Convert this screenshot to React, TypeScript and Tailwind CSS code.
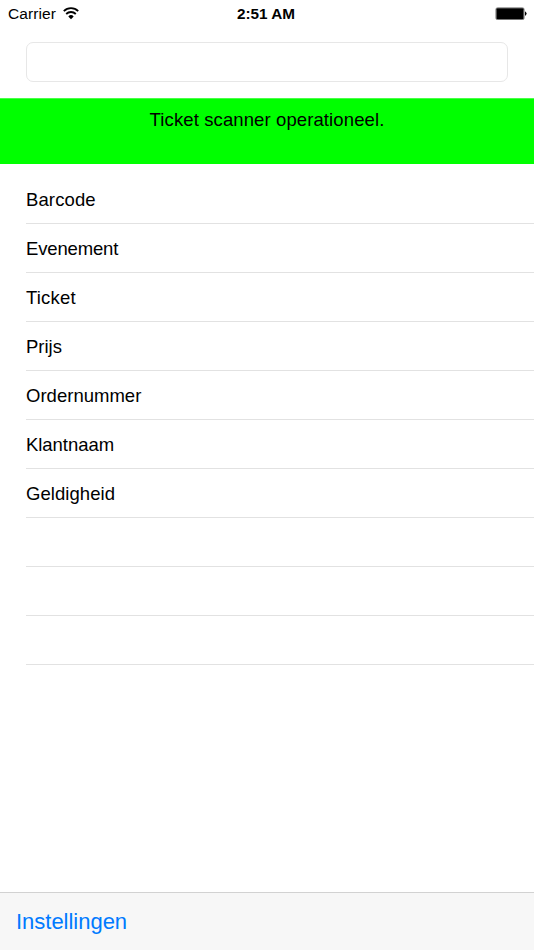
const rows = [
  { label: "Barcode", tracking: "tracking-[0.12px]" },
  { label: "Evenement", tracking: "tracking-[-0.15px]" },
  { label: "Ticket", tracking: "tracking-[0.2px]" },
  { label: "Prijs", tracking: "tracking-normal" },
  { label: "Ordernummer", tracking: "tracking-[0.02px]" },
  { label: "Klantnaam", tracking: "tracking-[-0.04px]" },
  { label: "Geldigheid", tracking: "tracking-[0.06px]" },
  { label: "", tracking: "" },
  { label: "", tracking: "" },
  { label: "", tracking: "" },
];

function WifiIcon() {
  return (
    <svg width="16" height="13" viewBox="0 0 16 13" fill="none" stroke="black" strokeWidth="1.8">
      <path d="M.8 4.1a10.2 10.2 0 0 1 14.4 0M3.2 7a6.8 6.8 0 0 1 9.6 0" />
      <path d="M8 12.2 5.3 9.4a3.9 3.9 0 0 1 5.4 0Z" fill="black" stroke="none" />
    </svg>
  );
}

function BatteryIcon() {
  return (
    <svg className="justify-self-end" width="32" height="13" viewBox="0 0 32 13">
      <rect x=".9" y=".8" width="28.2" height="11.9" rx="1.6" fill="white" stroke="#666" strokeWidth=".8" />
      <rect x="1.4" y="1.3" width="27.2" height="10.9" rx="1" />
      <path d="M30 4.3q3.2 2.3 0 4.6Z" />
    </svg>
  );
}

export default function App() {
  return (
    <div className="flex h-[950px] w-[534px] flex-col bg-white font-['Liberation_Sans',Arial,sans-serif] text-black">
      <header className="grid h-[27px] grid-cols-3 items-center pl-2 pr-[7px] text-[15.5px] leading-[27px]">
        <div className="flex items-center gap-[7px]">
          <span className="tracking-[0.08px]">Carrier</span>
          <WifiIcon />
        </div>
        <span className="pr-[3px] text-center text-[15.3px] font-bold">2:51 AM</span>
        <BatteryIcon />
      </header>
      <div className="flex h-[71px] px-[26px] pt-[15px]">
        <input aria-label="Barcode" className="h-10 w-full rounded-[7px] border border-[#e7e7e7] bg-white px-2 outline-none" />
      </div>
      <div className="h-[66px] border-t border-[#48ff48] bg-[#00ff00] pt-2 text-center text-[18.5px] leading-[26px] tracking-[0.11px]">
        Ticket scanner operationeel.
      </div>
      <main className="flex-1 pl-[26px] pt-[11px] text-[18.5px]">
        {rows.map((row, i) => (
          <div key={i} className={`flex h-[49px] items-center border-b border-[#e2e2e2] pt-[2px] ${row.tracking}`}>
            {row.label}
          </div>
        ))}
      </main>
      <footer className="flex h-[58px] items-center border-t border-[#d2d2d2] bg-[#f7f7f7] px-4 text-[22px] text-[#007aff]">
        <button className="tracking-[-0.02px]">Instellingen</button>
      </footer>
    </div>
  );
}
